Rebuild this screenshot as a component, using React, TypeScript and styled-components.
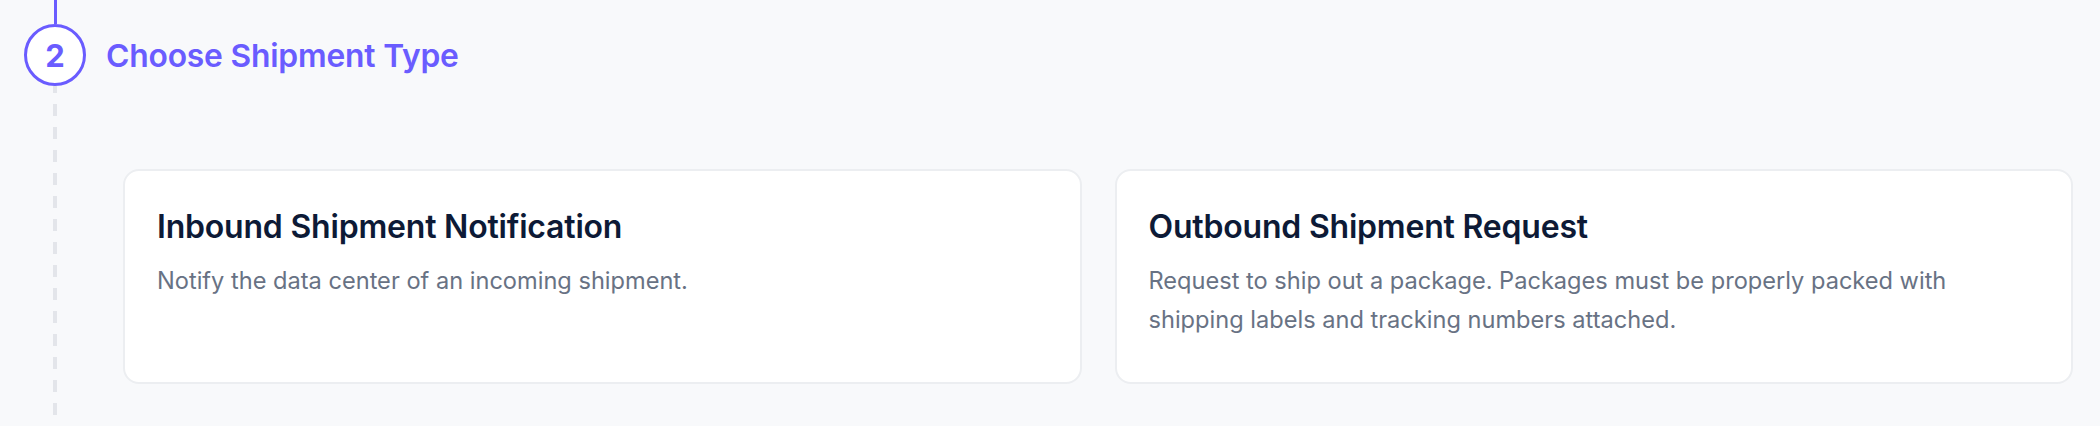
import React from 'react'
import styled, { createGlobalStyle } from 'styled-components'

const GlobalStyle = createGlobalStyle`
  html, body {
    margin: 0;
    padding: 0;
    background: #f8f9fb;
  }
  body {
    font-family: Inter, "Noto Sans", sans-serif;
    -webkit-font-smoothing: antialiased;
  }
`

const Page = styled.div`
  width: 2100px;
  height: 426px;
  box-sizing: border-box;
  padding: 0 27px 0 24px;
  background: #f8f9fb;
  overflow: hidden;
`

const Step = styled.div`
  display: flex;
  height: 100%;
  gap: 20px;
`

const Rail = styled.div`
  width: 62px;
  flex-shrink: 0;
  display: flex;
  flex-direction: column;
  align-items: center;
`

const TopLine = styled.div`
  width: 3px;
  height: 24px;
  background: #6a5cff;
`

const StepCircle = styled.div`
  width: 62px;
  height: 62px;
  box-sizing: border-box;
  border: 3.5px solid #6a5cff;
  border-radius: 50%;
  background: #ffffff;
  display: flex;
  align-items: center;
  justify-content: center;
  color: #6a5cff;
  font-size: 31px;
  font-weight: 700;
  flex-shrink: 0;
`

// 12px dash, 11px gap
const DashedLine = styled.div`
  flex: 1;
  width: 4px;
  background: linear-gradient(to bottom, #e3e5ea 0, #e3e5ea 12px, transparent 12px);
  background-size: 4px 23px;
  background-position: 0 -5px;
`

const Content = styled.div`
  flex: 1;
  display: flex;
  flex-direction: column;
`

const StepHeader = styled.div`
  height: 62px;
  margin-top: 24px;
  display: flex;
  align-items: center;
`

const StepTitle = styled.h2`
  margin: 0;
  color: #6a5cff;
  font-size: 31.8px;
  font-weight: 600;
  letter-spacing: -0.2px;
`

const CardGrid = styled.div`
  display: grid;
  grid-template-columns: 1fr 1fr;
  gap: 33px;
  margin-top: 83px;
  padding-left: 17px;
`

const Card = styled.button`
  min-height: 215px;
  box-sizing: border-box;
  padding: 36px 32px 32px 32px;
  background: #ffffff;
  border: 2px solid #eceef1;
  border-radius: 16px;
  text-align: left;
  font-family: inherit;
  display: flex;
  flex-direction: column;
  align-items: flex-start;
  cursor: pointer;
`

const CardTitle = styled.h3`
  margin: 0 0 14px;
  color: #0d1a36;
  font-size: 32px;
  line-height: 40px;
  font-weight: 600;
  letter-spacing: -0.2px;
`

const CardText = styled.p`
  margin: 0;
  color: #687284;
  font-size: 23.6px;
  line-height: 39px;
  font-weight: 400;
`

const shipmentTypes = [
  {
    title: 'Inbound Shipment Notification',
    text: 'Notify the data center of an incoming shipment.',
  },
  {
    title: 'Outbound Shipment Request',
    text: 'Request to ship out a package. Packages must be properly packed with shipping labels and tracking numbers attached.',
  },
]

export default function App() {
  return (
    <>
      <GlobalStyle />
      <Page>
        <Step>
          <Rail>
            <TopLine />
            <StepCircle>2</StepCircle>
            <DashedLine />
          </Rail>
          <Content>
            <StepHeader>
              <StepTitle>Choose Shipment Type</StepTitle>
            </StepHeader>
            <CardGrid>
              {shipmentTypes.map((t) => (
                <Card key={t.title} type="button">
                  <CardTitle>{t.title}</CardTitle>
                  <CardText>{t.text}</CardText>
                </Card>
              ))}
            </CardGrid>
          </Content>
        </Step>
      </Page>
    </>
  )
}
